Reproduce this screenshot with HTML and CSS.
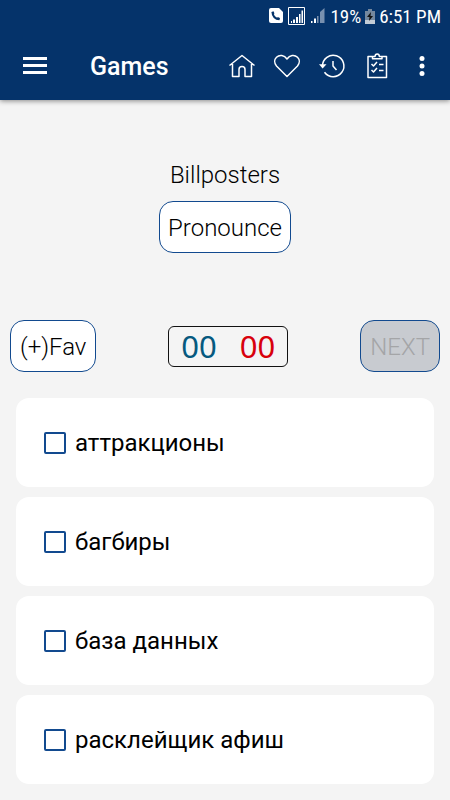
FILE: index.html
```html
<!DOCTYPE html>
<html lang="en">
<head>
<meta charset="utf-8">
<meta name="viewport" content="width=device-width, initial-scale=1">
<title>Games</title>
<link rel="stylesheet" href="styles.css">
</head>
<body>
<header class="top">
  <div class="status">
    <svg class="status-call" width="14" height="16" viewBox="0 0 14 16" aria-hidden="true"><path fill="#fff" d="M2 0h8l4 4v9q0 2-2 2H2q-2 0-2-2V2q0-2 2-2z"/><path fill="none" stroke="#05336a" stroke-width="2.2" d="M3.6 4.2c0 4 2.800 7 6.800 7"/><path fill="none" stroke="#05336a" stroke-width="2.600" d="M3 5.200l2-.8M9 11.400l.8-1.900"/></svg>
    <svg class="status-sim" width="18" height="18" viewBox="0 0 18 18" aria-hidden="true"><path fill="none" stroke="#fff" d="M.5.5h16v17H.5z"/><path fill="#fff" d="M3 14h1v2H3zM5 12.500h2V16H5zM8 10h2v6H8zM11 7h1.500v9H11zM13.500 3.500H15V16h-1.500z"/></svg>
    <svg class="status-signal" width="16" height="16" viewBox="0 0 16 16" aria-hidden="true"><path fill="#fff" d="M1 13h1.500v2H1zM4 10.500h2V15H4z"/><path fill="#7890af" d="M7 8h1.500v7H7zM10 4l4.500-4v15H10z"/></svg>
    <span>19%</span>
    <svg class="status-battery" width="10" height="15" viewBox="0 0 10 15" aria-hidden="true"><path fill="#75889e" d="M3 0h4v2h3v9H0V2h3z"/><path fill="#c3ccd6" d="M0 11h10v4H0z"/><path fill="#111" d="M6 3L2 8h2.500L4 12l4-5H5.500z"/></svg>
    <span>6:51 PM</span>
  </div>
  <nav class="bar">
    <button class="icon menu" aria-label="Menu"><svg width="24" height="18" viewBox="0 0 24 18"><path d="M0 1.500h24M0 8.500h24M0 15.500h24"/></svg></button>
    <h1>Games</h1>
    <button class="icon" aria-label="Home"><svg width="28" height="28" viewBox="0 0 28 28"><path d="M1.500 13.500L14 3.500l12.500 10M4.500 12v12.500h6.500v-7q0-3 3-3t3 3v7h6.500V12"/></svg></button>
    <button class="icon" aria-label="Favourites"><svg width="28" height="28" viewBox="0 0 28 28"><path d="M14 24.500L3.500 14C1 11 1.200 7.500 3.500 5.300c3-2.900 7.800-2.300 10.500 1.700 2.700-4 7.500-4.600 10.500-1.700C26.800 7.500 27 11 24.500 14z"/></svg></button>
    <button class="icon" aria-label="History"><svg width="28" height="28" viewBox="0 0 28 28"><path d="M4.500 14a10.700 10.700 0 1 1 2 6.200M9 22.600q1.500 1.200 3.500 1.600M15 9v5l3.500 4"/><path class="solid" d="M1 12.200h7.500L4.600 16.500z"/></svg></button>
    <button class="icon" aria-label="Tests"><svg width="28" height="28" viewBox="0 0 28 28"><path d="M10 4.500H5v21h18.500v-21h-5M9.500 6.800V4.500H12q.2-2.500 2.200-2.500t2.200 2.500H19v2.300zM8.500 12l2 2 3.500-4M16 12.500h4.500M8.500 18l2 2 3.500-4M16 18.500h4.500"/></svg></button>
    <button class="icon more" aria-label="More options"><svg width="6" height="20" viewBox="0 0 6 20"><circle class="dot" cx="3" cy="2.500" r="2.500"/><circle class="dot" cx="3" cy="10" r="2.500"/><circle class="dot" cx="3" cy="17.500" r="2.500"/></svg></button>
  </nav>
</header>
<main>
  <section class="word">
    <h2>Billposters</h2>
    <button class="btn">Pronounce</button>
  </section>
  <section class="controls">
    <button class="btn">(+)Fav</button>
    <div class="score"><span class="right">00</span><span class="wrong">00</span></div>
    <button class="btn" disabled>NEXT</button>
  </section>
  <form class="answers">
    <label class="answer"><input type="checkbox">аттракционы</label>
    <label class="answer"><input type="checkbox">багбиры</label>
    <label class="answer"><input type="checkbox">база данных</label>
    <label class="answer"><input type="checkbox">расклейщик афиш</label>
  </form>
</main>
</body>
</html>
```
FILE: styles.css
```css
* { box-sizing: border-box; }
body {
  margin: 0;
  background: #f4f4f4;
  color: #000;
  font-family: Roboto, "Noto Sans", sans-serif;
}
h1, h2 { margin: 0; }
button { font-family: inherit; }
.top {
  background: #05336a;
  color: #fff;
  box-shadow: 0 1px 5px rgba(0, 0, 0, .45);
}
.status {
  display: flex;
  justify-content: flex-end;
  align-items: center;
  height: 32px;
  padding-right: 9px;
  gap: 4px;
  font-family: "Roboto Condensed", Roboto, sans-serif;
  font-size: 19px;
}
.status-call { margin-right: 1px; }
.bar {
  display: flex;
  align-items: center;
  height: 68px;
  padding: 0 25px 0 23px;
}
.bar h1 {
  flex: 1;
  padding: 2px 0 0 43px;
  font-size: 25px;
  font-weight: 500;
  line-height: 32px;
}
.icon {
  display: flex;
  padding: 0;
  border: 0;
  background: none;
}
.icon + .icon { margin-left: 17px; }
.icon.more { margin-left: 28px; }
.icon path {
  fill: none;
  stroke: #fff;
  stroke-width: 1.5;
  stroke-linejoin: round;
}
.icon.menu path { stroke-width: 3; }
.icon .solid, .icon .dot { fill: #fff; stroke: none; }
.word {
  display: flex;
  flex-direction: column;
  align-items: center;
  gap: 10px;
  padding-top: 59px;
}
.word h2 {
  font-size: 24px;
  font-weight: 300;
  line-height: 32px;
}
.btn {
  height: 52px;
  padding: 2px 8px 0;
  border: 1px solid #124a8f;
  border-radius: 14px;
  background: #fff;
  color: #000;
  font-size: 24px;
  font-weight: 300;
}
.controls .btn { padding: 2px 9px 0; }
.btn:disabled { background: #c8cbd0; color: #a4a5a7; }
.controls {
  display: flex;
  justify-content: space-between;
  align-items: center;
  margin-top: 67px;
  padding: 0 10px;
}
.score {
  display: flex;
  gap: 23px;
  padding: 0 12px;
  border: 1px solid #111;
  border-radius: 6px;
  font-family: "Noto Sans", sans-serif;
  font-size: 31px;
  line-height: 39px;
}
.right { color: #06597f; }
.wrong { color: #d8000c; }
.answers {
  display: flex;
  flex-direction: column;
  gap: 10px;
  padding: 26px 16px 16px;
}
.answer {
  display: flex;
  align-items: center;
  gap: 9px;
  height: 89px;
  padding-left: 28px;
  border-radius: 13px;
  background: #fff;
  font-size: 24px;
}
.answer input {
  appearance: none;
  width: 22px;
  height: 22px;
  margin: 0;
  border: 2px solid #124a8f;
  border-radius: 2px;
}
```
